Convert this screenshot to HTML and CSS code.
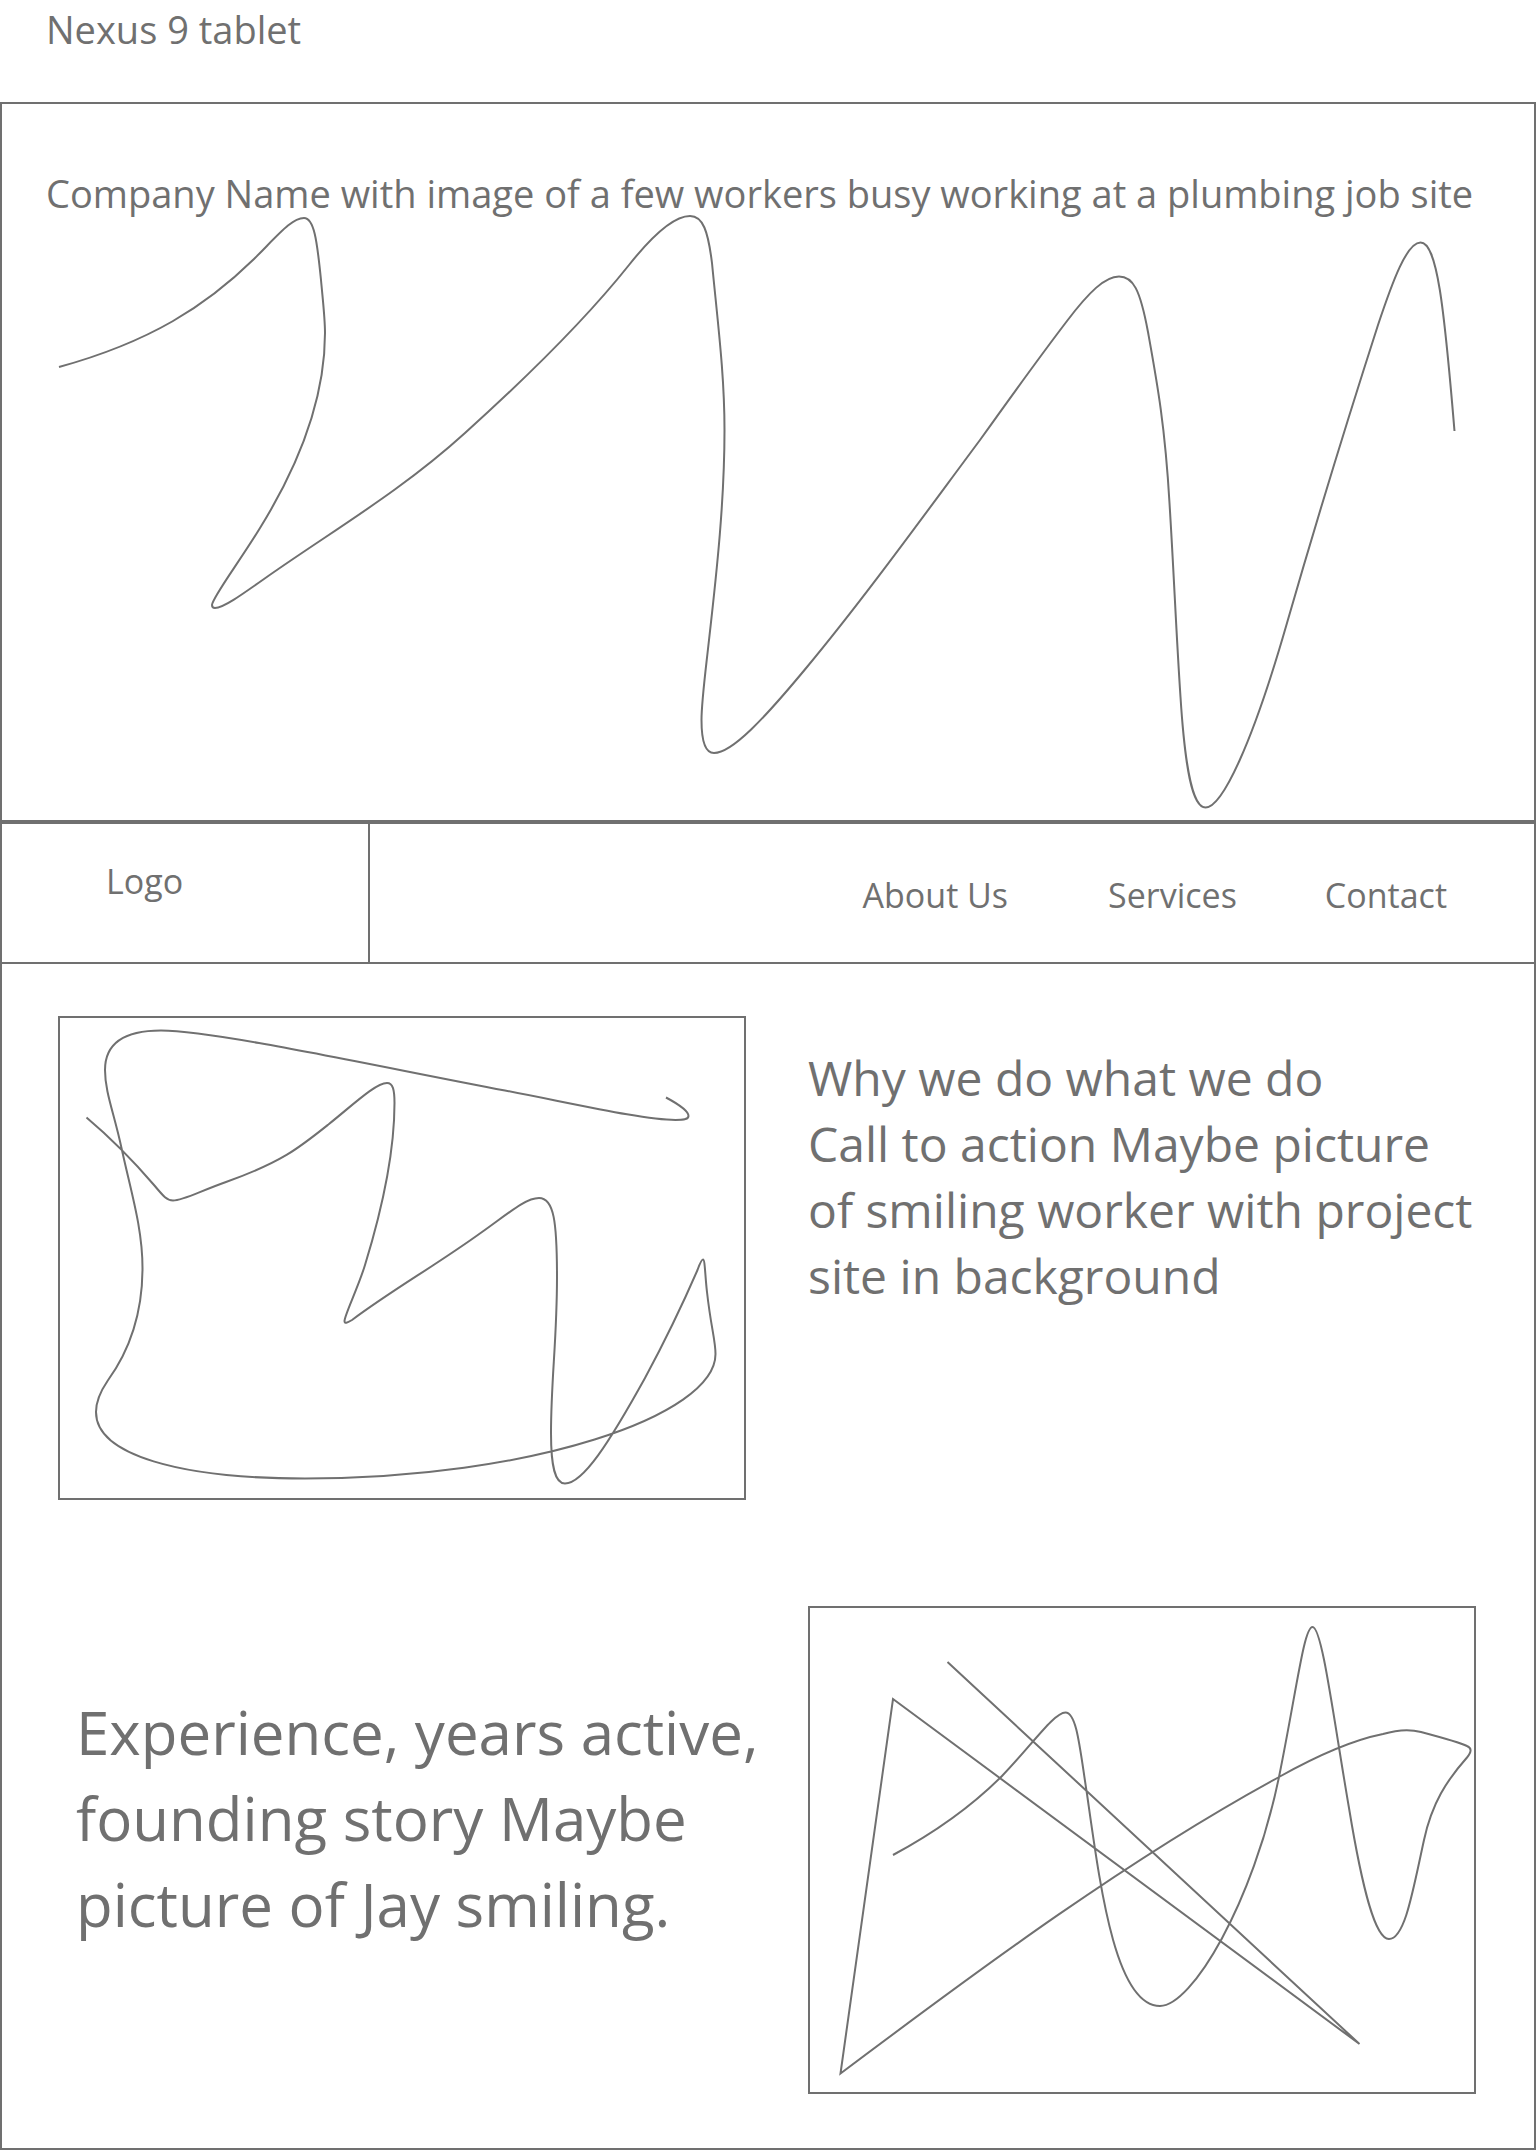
FILE: index.html
```html
<!DOCTYPE html>
<html lang="en">
<head>
<meta charset="utf-8">
<meta name="viewport" content="width=device-width, initial-scale=1">
<title>Nexus 9 tablet</title>
<link rel="stylesheet" href="styles.css">
</head>
<body>
<p class="device">Nexus 9 tablet</p>
<div class="frame">
  <header class="hero">
    <h1 class="hero-title">Company Name with image of a few workers busy working at a plumbing job site</h1>
    <svg class="sketch" viewBox="2 217 1532 603" role="img" aria-label="Workers at a plumbing job site">
      <path d="M59,367 C150,342 206,306 254,259 C279,234 292,218 304,218 C314,218 317,240 321,280 C323,302 325,318 325,333 C325,400 299,465 260,528 C240,561 212,598 212,605 C212,607 213,608 215,608 C223,608 240,596 264,579 C332,531 400,492 465,433 C526,378 586,319 629,265 C656,231 676,216 690,216 C703,216 708,231 712,263 C718,325 724.500,375 724.500,430 C724.500,500 717,570 709,640 C705,676 701.500,702 701.500,720 C701.500,743 706,753 714,753 C732,753 764,719 807,667 C865,597 922,518 980,440 C1010,398 1038,359 1067,321 C1089,292 1105,276.500 1119,276.500 C1133,276.500 1140,289 1148,332 C1157,382 1165,425 1169.500,503 C1174,575 1176,630 1180.500,697 C1185,767 1192,807.500 1205.500,807.500 C1222,807.500 1252,745 1287,623 C1321,505 1350,412 1378,325 C1393,280 1407,242.500 1420.500,242.500 C1437,242.500 1444,305 1454.500,431"/>
    </svg>
  </header>
  <nav class="bar">
    <a class="logo" href="#">Logo</a>
    <ul class="links">
      <li class="about"><a href="#about">About Us</a></li>
      <li class="services"><a href="#services">Services</a></li>
      <li><a href="#contact">Contact</a></li>
    </ul>
  </nav>
  <main class="features">
    <div class="picture">
      <svg class="sketch" viewBox="60 1018 684 480" role="img" aria-label="Smiling worker with project site in background">
        <path d="M86.500,1117.500 C112,1139 130,1157 154,1185 C164,1197 167,1200.500 173,1200.500 C183,1200.500 198,1192 226,1182 C282,1162 299,1148 329,1124 C355,1103 376,1083 387,1083 C393,1083 394.500,1090 394.500,1103 C394.500,1150 385,1200 365,1265 C358,1288 344.500,1315 344.500,1321 C344.500,1324 347,1323 352,1320 C395,1288 435,1266 482,1232 C510,1212 526,1198 539,1198 C554,1198 557,1222 557,1277 C557,1340 551,1380 551,1433 C551,1467 555,1483.500 565,1483.500 C583,1483.500 609,1443 645,1378 C666,1339 681,1308 697.500,1270 C700,1263 702,1259.500 703,1259.500 C705,1259.500 705,1275 707,1292 C711,1328 715.500,1340 715.500,1354 C715.500,1416 530,1478.500 305,1478.500 C180,1478.500 96,1455 96,1412 C96,1401 100,1392 107.500,1381 C130,1350 142.500,1312 142.500,1268 C142.500,1228 131,1192 121.500,1148 C114,1113 105,1092 105,1070 C105,1042 127,1030.500 161,1030.500 C215,1030.500 380,1067 505,1090.500 C580,1105 645,1120 675.500,1120 C685,1120 688.500,1119 688.500,1116 C688.500,1111 680,1105 666,1097.500"/>
      </svg>
    </div>
    <p class="reason" id="about">Why we do what we do<br>Call to action Maybe picture<br>of smiling worker with project<br>site in background</p>
    <p class="story" id="services">Experience, years active,<br>founding story Maybe<br>picture of Jay smiling.</p>
    <div class="picture">
      <svg class="sketch" viewBox="810 1608 664 484" role="img" aria-label="Jay smiling">
        <path d="M893,1855 C934,1833 970,1808 1002,1776 C1032,1745 1054,1712.500 1065.500,1712.500 C1077,1712.500 1080,1750 1087,1794 C1100,1885 1115,2006 1160,2006 C1192,2006 1253,1903 1279,1777 C1297,1688 1304,1627 1312.500,1627 C1322,1627 1333,1715 1349,1808 C1362,1887 1375,1939 1389,1939 C1405,1939 1413,1890 1424,1840 C1432,1803 1447,1780 1467,1757.500 C1471.500,1752 1472,1748 1467,1746 C1462,1743.500 1436,1736 1421,1732 C1410,1729 1398,1729.500 1383,1734 C1353,1740 1320,1754 1279,1777 C1130,1858 985,1965 840.500,2073.500 L893,1699 L1359.500,2044 L947.500,1662"/>
      </svg>
    </div>
  </main>
</div>
</body>
</html>
```
FILE: styles.css
```css
:root {
  --ink: #707070;
}

* {
  box-sizing: border-box;
}

body {
  margin: 0;
  background: #fff;
  color: var(--ink);
  font-family: "Open Sans", "Noto Sans", sans-serif;
}

p,
h1,
ul {
  margin: 0;
  padding: 0;
  font-weight: 400;
}

a {
  color: inherit;
  text-decoration: none;
}

.device {
  padding: 5px 46px 49px;
  font-size: 38px;
  line-height: 48px;
}

.frame {
  border: 2px solid var(--ink);
}

.hero {
  padding-top: 65px;
  border-bottom: 4px solid var(--ink);
}

.hero-title {
  padding: 0 44px;
  font-size: 38px;
  line-height: 48px;
}

.sketch {
  display: block;
  width: 100%;
  overflow: visible;
  fill: none;
  stroke: var(--ink);
  stroke-width: 2;
}

.bar {
  display: flex;
  border-bottom: 2px solid var(--ink);
  font-size: 34px;
  line-height: 46px;
}

.logo {
  width: 24%;
  padding: 34px 0 58px 104px;
  border-right: 2px solid var(--ink);
}

.links {
  display: flex;
  flex: 1;
  justify-content: flex-end;
  padding: 48px 87px 0 0;
  list-style: none;
}

.about {
  margin-right: 100px;
}

.services {
  margin-right: 88px;
}

.features {
  display: grid;
  grid-template-columns: minmax(0, 688fr) minmax(0, 668fr);
  gap: 106px 62px;
  align-items: start;
  padding: 52px 58px 54px 56px;
}

.picture {
  border: 2px solid var(--ink);
}

.reason {
  padding-top: 29px;
  font-size: 48px;
  line-height: 66px;
}

.story {
  padding: 83px 0 0 18px;
  font-size: 60px;
  line-height: 86px;
  white-space: nowrap;
}
```
